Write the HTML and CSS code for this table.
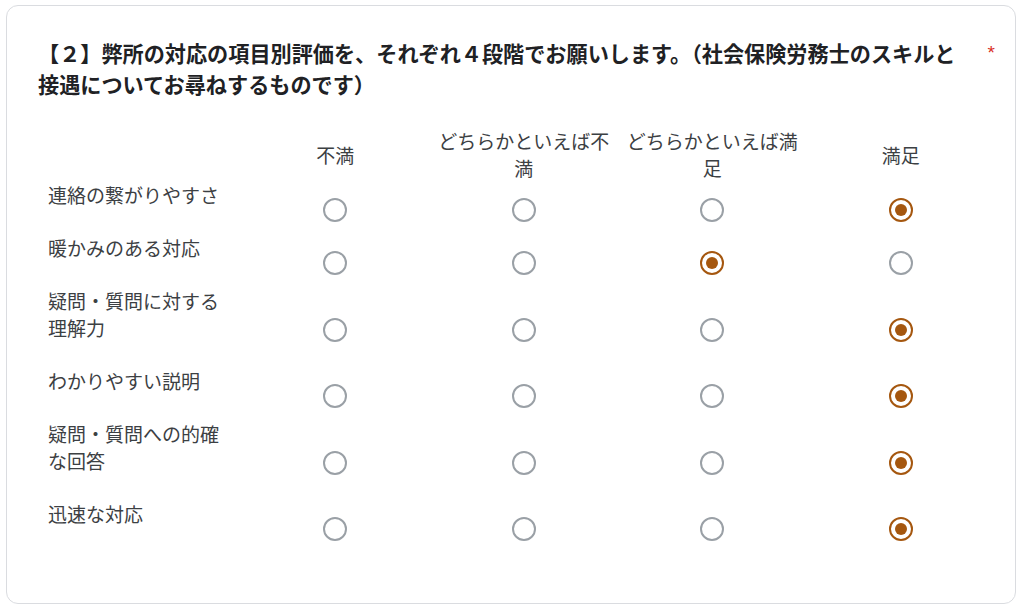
FILE: index.html
```html
<!DOCTYPE html>
<html lang="ja">
<head>
<meta charset="utf-8">
<title>項目別評価</title>
<link rel="stylesheet" href="styles.css">
</head>
<body>
<div class="card">
  <div class="q-head">
    <h2 class="q-title">【２】弊所の対応の項目別評価を、それぞれ４段階でお願いします。（社会保険労務士のスキルと接遇についてお尋ねするものです）</h2>
    <span class="required">*</span>
  </div>
  <div class="matrix">
    <div class="row head-row">
      <div class="label"></div>
      <div class="col-head">不満</div>
      <div class="col-head">どちらかといえば不満</div>
      <div class="col-head">どちらかといえば満足</div>
      <div class="col-head">満足</div>
    </div>
    <div class="row">
      <div class="label">連絡の繋がりやすさ</div>
      <label class="choice"><input type="radio" name="r1" class="radio"></label>
      <label class="choice"><input type="radio" name="r1" class="radio"></label>
      <label class="choice"><input type="radio" name="r1" class="radio"></label>
      <label class="choice"><input type="radio" name="r1" class="radio" checked></label>
    </div>
    <div class="row">
      <div class="label">暖かみのある対応</div>
      <label class="choice"><input type="radio" name="r2" class="radio"></label>
      <label class="choice"><input type="radio" name="r2" class="radio"></label>
      <label class="choice"><input type="radio" name="r2" class="radio" checked></label>
      <label class="choice"><input type="radio" name="r2" class="radio"></label>
    </div>
    <div class="row">
      <div class="label">疑問・質問に対する理解力</div>
      <label class="choice"><input type="radio" name="r3" class="radio"></label>
      <label class="choice"><input type="radio" name="r3" class="radio"></label>
      <label class="choice"><input type="radio" name="r3" class="radio"></label>
      <label class="choice"><input type="radio" name="r3" class="radio" checked></label>
    </div>
    <div class="row">
      <div class="label">わかりやすい説明</div>
      <label class="choice"><input type="radio" name="r4" class="radio"></label>
      <label class="choice"><input type="radio" name="r4" class="radio"></label>
      <label class="choice"><input type="radio" name="r4" class="radio"></label>
      <label class="choice"><input type="radio" name="r4" class="radio" checked></label>
    </div>
    <div class="row">
      <div class="label">疑問・質問への的確な回答</div>
      <label class="choice"><input type="radio" name="r5" class="radio"></label>
      <label class="choice"><input type="radio" name="r5" class="radio"></label>
      <label class="choice"><input type="radio" name="r5" class="radio"></label>
      <label class="choice"><input type="radio" name="r5" class="radio" checked></label>
    </div>
    <div class="row">
      <div class="label">迅速な対応</div>
      <label class="choice"><input type="radio" name="r6" class="radio"></label>
      <label class="choice"><input type="radio" name="r6" class="radio"></label>
      <label class="choice"><input type="radio" name="r6" class="radio"></label>
      <label class="choice"><input type="radio" name="r6" class="radio" checked></label>
    </div>
  </div>
</div>
</body>
</html>
```

FILE: styles.css
```css
* {
  box-sizing: border-box;
}

html, body {
  margin: 0;
  background: #ffffff;
}

body {
  padding: 5px 8px 0 6px;
  font-family: "Noto Sans CJK JP", "Noto Sans", sans-serif;
  color: #3c4043;
}

.card {
  border: 1px solid #dadce0;
  border-radius: 12px;
  padding: 31px 20px 50px 31px;
  background: #fff;
}

.q-head {
  display: grid;
  grid-template-columns: 1fr auto;
  column-gap: 16px;
  align-items: start;
}

.q-title {
  margin: 0;
  padding-right: 12px;
  font-size: 21.15px;
  line-height: 31px;
  font-weight: 700;
  color: #202124;
}

.required {
  font-family: "Liberation Sans", Arial, sans-serif;
  font-size: 19px;
  line-height: 31px;
  color: #d93025;
}

.matrix {
  margin: 28px 0 0 10px;
}

.row {
  display: grid;
  grid-template-columns: 193px repeat(4, 1fr);
}

.head-row {
  min-height: 54px;
}

.col-head {
  align-self: center;
  text-align: center;
  font-size: 19px;
  line-height: 27px;
  color: #3c4043;
}

.label {
  font-size: 19px;
  line-height: 27px;
  padding: 0 12px 26px 0;
  color: #3c4043;
}

.choice {
  display: flex;
  justify-content: center;
  align-items: center;
  padding-top: 5px;
  cursor: pointer;
}

.radio {
  appearance: none;
  -webkit-appearance: none;
  margin: 0;
  width: 24px;
  height: 24px;
  border: 2.5px solid #9aa0a6;
  border-radius: 50%;
  display: grid;
  place-items: center;
  background: #fff;
}

.radio:checked {
  border-color: #a5570f;
}

.radio:checked::after {
  content: "";
  width: 12px;
  height: 12px;
  border-radius: 50%;
  background: #a5570f;
}
```
